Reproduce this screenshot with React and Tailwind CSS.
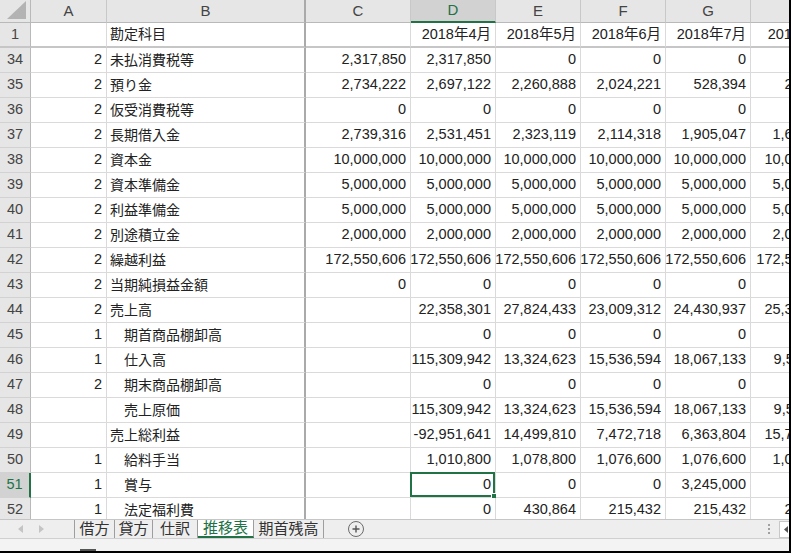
import React from "react";

const widthCls = [
  "w-[76px]",
  "w-[199px]",
  "w-[105px]",
  "w-[85px]",
  "w-[85px]",
  "w-[85px]",
  "w-[85px]",
  "w-[91px]",
];

const letters = ["A", "B", "C", "D", "E", "F", "G", "H"];

// [行番号, A, B, C, D, E, F, G, H]
const rows = [
  ["34", "2", "未払消費税等", "2,317,850", "2,317,850", "0", "0", "0", "0"],
  ["35", "2", "預り金", "2,734,222", "2,697,122", "2,260,888", "2,024,221", "528,394", "256,530"],
  ["36", "2", "仮受消費税等", "0", "0", "0", "0", "0", "0"],
  ["37", "2", "長期借入金", "2,739,316", "2,531,451", "2,323,119", "2,114,318", "1,905,047", "1,695,776"],
  ["38", "2", "資本金", "10,000,000", "10,000,000", "10,000,000", "10,000,000", "10,000,000", "10,000,000"],
  ["39", "2", "資本準備金", "5,000,000", "5,000,000", "5,000,000", "5,000,000", "5,000,000", "5,000,000"],
  ["40", "2", "利益準備金", "5,000,000", "5,000,000", "5,000,000", "5,000,000", "5,000,000", "5,000,000"],
  ["41", "2", "別途積立金", "2,000,000", "2,000,000", "2,000,000", "2,000,000", "2,000,000", "2,000,000"],
  ["42", "2", "繰越利益", "172,550,606", "172,550,606", "172,550,606", "172,550,606", "172,550,606", "172,550,606"],
  ["43", "2", "当期純損益金額", "0", "0", "0", "0", "0", "0"],
  ["44", "2", "売上高", "", "22,358,301", "27,824,433", "23,009,312", "24,430,937", "25,312,948"],
  ["45", "1", "　期首商品棚卸高", "", "0", "0", "0", "0", "0"],
  ["46", "1", "　仕入高", "", "115,309,942", "13,324,623", "15,536,594", "18,067,133", "9,514,211"],
  ["47", "2", "　期末商品棚卸高", "", "0", "0", "0", "0", "0"],
  ["48", "", "　売上原価", "", "115,309,942", "13,324,623", "15,536,594", "18,067,133", "9,514,211"],
  ["49", "", "売上総利益", "", "-92,951,641", "14,499,810", "7,472,718", "6,363,804", "15,798,737"],
  ["50", "1", "　給料手当", "", "1,010,800", "1,078,800", "1,076,600", "1,076,600", "1,076,600"],
  ["51", "1", "　賞与", "", "0", "0", "0", "3,245,000", "0"],
  ["52", "1", "　法定福利費", "", "0", "430,864", "215,432", "215,432", "215,432"],
];

const tabs = [
  { name: "借方", w: "w-[41px]" },
  { name: "貸方", w: "w-[38px]" },
  { name: "仕訳", w: "w-[45px]" },
  { name: "推移表", w: "w-[56px]", active: true },
  { name: "期首残高", w: "w-[70px]" },
];

function RowHead({ n, active, thick }) {
  return (
    <div
      className={`w-[31px] shrink-0 h-full flex items-center justify-center text-[14.5px] ${
        thick ? "border-b-2 border-b-[#c6c6c6]" : "border-b border-b-[#d2d2d2]"
      } ${
        active
          ? "bg-[#d2d2d2] text-[#217346] border-r-2 border-r-[#217346]"
          : "bg-[#e6e6e6] text-[#444] border-r border-r-[#b9b9b9]"
      }`}
    >
      {n}
    </div>
  );
}

function Cell({ i, children, thick, selected }) {
  const left = i === 1;
  return (
    <div
      className={`${widthCls[i]} shrink-0 h-full relative flex items-center whitespace-nowrap ${
        left ? "justify-start pl-[3px] text-[14px]" : "justify-end pr-[4px] text-[14.5px]"
      } ${i === 1 ? "border-r-2 border-r-[#aaaaaa]" : "border-r border-r-[#dadada]"} ${
        thick ? "border-b-2 border-b-[#c6c6c6]" : "border-b border-b-[#dadada]"
      }`}
    >
      {children}
      {selected && (
        <div className="absolute -left-[1px] -top-[1px] right-0 bottom-0 border-2 border-[#217346]">
          <div className="absolute -right-[4px] -bottom-[4px] w-[6px] h-[6px] bg-[#217346] border border-white" />
        </div>
      )}
    </div>
  );
}

export default function App() {
  return (
    <div className="w-[791px] h-[553px] bg-white overflow-hidden border-r-2 border-b-2 border-black flex flex-col font-['Liberation_Sans','Noto_Sans_CJK_JP',sans-serif] text-[#222]">
      {/* シート */}
      <div className="h-[519px] shrink-0 overflow-hidden">
        {/* 列見出し */}
        <div className="flex h-[23px]">
          <div className="w-[31px] shrink-0 h-full bg-[#e6e6e6] border-r border-r-[#b9b9b9] border-b border-b-[#b9b9b9] flex items-end justify-end pr-[4px] pb-[3px]">
            <svg width="19" height="18" viewBox="0 0 19 18">
              <polygon points="19,0 19,18 0,18" fill="#b3b3b3" />
            </svg>
          </div>
          {letters.map((l, i) => (
            <div
              key={l}
              className={`${widthCls[i]} shrink-0 h-full flex items-center justify-center text-[15px] ${
                i === 1 ? "border-r-2 border-r-[#aaaaaa]" : "border-r border-r-[#c8c8c8]"
              } ${
                l === "D"
                  ? "bg-[#d2d2d2] text-[#217346] border-b-2 border-b-[#217346]"
                  : "bg-[#e6e6e6] text-[#444] border-b border-b-[#b9b9b9]"
              }`}
            >
              {l}
            </div>
          ))}
        </div>

        {/* 1行目 */}
        <div className="flex h-[25px]">
          <RowHead n="1" thick />
          <Cell i={0} thick />
          <Cell i={1} thick>勘定科目</Cell>
          <Cell i={2} thick />
          <Cell i={3} thick>2018年4月</Cell>
          <Cell i={4} thick>2018年5月</Cell>
          <Cell i={5} thick>2018年6月</Cell>
          <Cell i={6} thick>2018年7月</Cell>
          <Cell i={7} thick>2018年8月</Cell>
        </div>

        {rows.map((r) => (
          <div key={r[0]} className="flex h-[25px]">
            <RowHead n={r[0]} active={r[0] === "51"} />
            {r.slice(1).map((v, i) => (
              <Cell key={i} i={i} selected={r[0] === "51" && i === 3}>
                {v}
              </Cell>
            ))}
          </div>
        ))}
      </div>

      {/* シート見出し */}
      <div className="h-[19px] shrink-0 flex items-stretch bg-[#eeeeee] border-t border-[#c6c6c6] text-[15px]">
        <div className="w-[74px] shrink-0 flex items-center gap-[16px] pl-[18px]">
          <svg width="5" height="8" viewBox="0 0 5 8">
            <polygon points="5,0 5,8 0,4" fill="#c4c4c4" />
          </svg>
          <svg width="5" height="8" viewBox="0 0 5 8">
            <polygon points="0,0 0,8 5,4" fill="#c4c4c4" />
          </svg>
        </div>
        {tabs.map((t, i) => (
          <div
            key={t.name}
            className={`${t.w} shrink-0 flex items-center justify-center border-r border-r-[#9e9e9e] ${
              i === 0 ? "border-l border-l-[#9e9e9e]" : ""
            } ${
              t.active
                ? "bg-white text-[#217346] border-b-2 border-b-[#217346]"
                : "text-[#333]"
            }`}
          >
            {t.name}
          </div>
        ))}
        <div className="ml-[23px] flex items-center">
          <svg width="18" height="18" viewBox="0 0 18 18">
            <circle cx="9" cy="9" r="7.5" fill="none" stroke="#6b6b6b" strokeWidth="1" />
            <path d="M9 5.5v7M5.5 9h7" stroke="#555" strokeWidth="1.4" />
          </svg>
        </div>
        <div className="ml-auto flex items-center gap-[9px]">
          <div className="flex flex-col gap-[2px]">
            <div className="w-[2px] h-[2px] bg-[#a0a0a0]" />
            <div className="w-[2px] h-[2px] bg-[#a0a0a0]" />
            <div className="w-[2px] h-[2px] bg-[#a0a0a0]" />
          </div>
          <div className="w-[10px] h-[17px] bg-white border border-r-0 border-[#c8c8c8] flex items-center justify-end pr-[1px]">
            <svg width="4" height="7" viewBox="0 0 4 7">
              <polygon points="4,0 4,7 0,3.5" fill="#555" />
            </svg>
          </div>
        </div>
      </div>

      {/* ステータスバー */}
      <div className="flex-1 bg-[#f3f3f3] border-t border-[#d0d0d0] flex items-end pl-[80px]">
        <div className="w-[16px] h-[2px] bg-[#555]" />
      </div>
    </div>
  );
}
